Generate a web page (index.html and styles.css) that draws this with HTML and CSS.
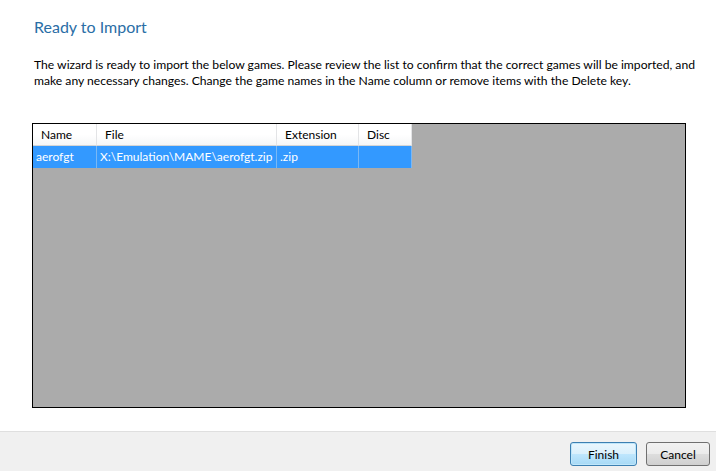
FILE: index.html
```html
<!DOCTYPE html>
<html lang="en">
<head>
  <meta charset="UTF-8">
  <title>Ready to Import</title>
  <link rel="stylesheet" href="styles.css">
</head>
<body>

<div class="wizard">
  <div class="page">
    <h1 class="page-title">Ready to Import</h1>
    <p class="page-desc">The wizard is ready to import the below games. Please review the list to confirm that the correct games will be imported, and make any necessary changes. Change the game names in the Name column or remove items with the Delete key.</p>

    <div class="grid-box">
      <div class="grid-row grid-head">
        <div class="cell col-name">Name</div>
        <div class="cell col-file">File</div>
        <div class="cell col-ext">Extension</div>
        <div class="cell col-disc">Disc</div>
      </div>
      <div class="grid-row grid-sel">
        <div class="cell col-name">aerofgt</div>
        <div class="cell col-file">X:\Emulation\MAME\aerofgt.zip</div>
        <div class="cell col-ext">.zip</div>
        <div class="cell col-disc"></div>
      </div>
    </div>
  </div>

  <div class="footer">
    <button class="btn btn-default">Finish</button>
    <button class="btn">Cancel</button>
  </div>
</div>

</body>
</html>
```

FILE: styles.css
```css
body {
  margin: 0;
  background-color: #ffffff;
  font-family: Lato, "Noto Sans", sans-serif;
  font-size: 12px;
  color: #000000;
}

.wizard {
  height: 471px;
  display: flex;
  flex-direction: column;
}

.page {
  flex: 1;
  padding: 15px 0 0 32px;
}

.page-title {
  margin: 0 0 0 2px;
  font-weight: normal;
  font-size: 16px;
  line-height: 24px;
  color: #2a6ea6;
}

.page-desc {
  margin: 18px 20px 0 2px;
  font-size: 12.15px;
  line-height: 16px;
}

.grid-box {
  margin-top: 34px;
  width: 654px;
  height: 285px;
  box-sizing: border-box;
  border: 1px solid #000000;
  background-color: #ababab;
}

.grid-row {
  display: flex;
  width: 379px;
}

.cell {
  box-sizing: border-box;
  padding: 0 6px;
  white-space: nowrap;
  overflow: hidden;
}

.grid-head .cell {
  height: 22px;
  line-height: 21px;
  padding-left: 8px;
  background: linear-gradient(#ffffff, #ffffff 50%, #f5f6f7);
  border-right: 1px solid #e3e4e6;
  border-bottom: 1px solid #d5d5d5;
}

.grid-sel .cell {
  height: 22px;
  line-height: 21px;
  padding-left: 3px;
  background-color: #3399ff;
  color: #ffffff;
  border-right: 1px solid #7ab8f5;
}

.col-name { width: 64px; }
.col-file { width: 180px; }
.col-ext { width: 82px; }
.col-disc { width: 53px; }

.footer {
  height: 40px;
  border-top: 1px solid #dfdfdf;
  background-color: #f0f0f0;
  display: flex;
  justify-content: flex-end;
  align-items: flex-start;
  gap: 9px;
  padding: 10px 6px 0 0;
  box-sizing: border-box;
}

.btn {
  width: 64px;
  height: 24px;
  padding: 0;
  font-family: Lato, "Noto Sans", sans-serif;
  font-size: 12px;
  color: #000000;
  border: 1px solid #707070;
  border-radius: 3px;
  background: linear-gradient(#f2f2f2, #ebebeb 50%, #dddddd 51%, #cfcfcf);
}

.btn-default {
  width: 67px;
  border-color: #3c7fb1;
  background: linear-gradient(#eaf6fd, #d9f0fc 50%, #bee6fd 51%, #a7d9f5);
  box-shadow: inset 0 0 0 1px #bfe6fa;
}
```
